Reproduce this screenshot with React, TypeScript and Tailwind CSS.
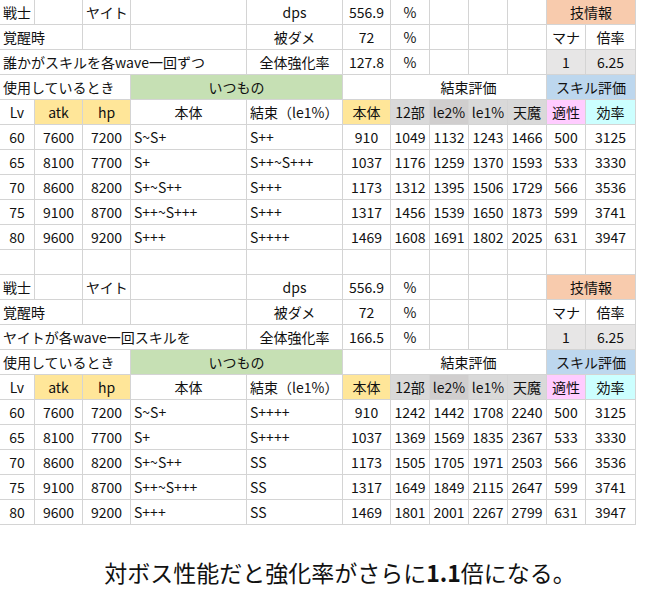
const W = [35, 48, 48, 116, 96, 48, 39, 39, 39, 39, 39, 50]

type Row = [number, number, number, string, string, number, number, number, number, number, number, number]

const t1: Row[] = [
  [60, 7600, 7200, "S~S+", "S++", 910, 1049, 1132, 1243, 1466, 500, 3125],
  [65, 8100, 7700, "S+", "S++~S+++", 1037, 1176, 1259, 1370, 1593, 533, 3330],
  [70, 8600, 8200, "S+~S++", "S+++", 1173, 1312, 1395, 1506, 1729, 566, 3536],
  [75, 9100, 8700, "S++~S+++", "S+++", 1317, 1456, 1539, 1650, 1873, 599, 3741],
  [80, 9600, 9200, "S+++", "S++++", 1469, 1608, 1691, 1802, 2025, 631, 3947],
]
const t2: Row[] = [
  [60, 7600, 7200, "S~S+", "S++++", 910, 1242, 1442, 1708, 2240, 500, 3125],
  [65, 8100, 7700, "S+", "S++++", 1037, 1369, 1569, 1835, 2367, 533, 3330],
  [70, 8600, 8200, "S+~S++", "SS", 1173, 1505, 1705, 1971, 2503, 566, 3536],
  [75, 9100, 8700, "S++~S+++", "SS", 1317, 1649, 1849, 2115, 2647, 599, 3741],
  [80, 9600, 9200, "S+++", "SS", 1469, 1801, 2001, 2267, 2799, 631, 3947],
]

const c = "border border-[#d4d4d4] h-[25px] p-0 text-center whitespace-nowrap overflow-visible"
const l = "border border-[#d4d4d4] h-[25px] px-[3px] py-0 text-left whitespace-nowrap"

function Block({ label, rate, rows }: { label: string; rate: string; rows: Row[] }) {
  return (
    <>
      <tr>
        <td className={l}>戦士</td>
        <td className={c}></td>
        <td className={l}>ヤイト</td>
        <td className={c}></td>
        <td className={c}>dps</td>
        <td className={c}>556.9</td>
        <td className={c}>%</td>
        <td className={c}></td>
        <td className={c}></td>
        <td className={c}></td>
        <td className={c + " bg-[#f8cbad]"} colSpan={2}>技情報</td>
      </tr>
      <tr>
        <td className={l} colSpan={2}>覚醒時</td>
        <td className={c}></td>
        <td className={c}></td>
        <td className={c}>被ダメ</td>
        <td className={c}>72</td>
        <td className={c}>%</td>
        <td className={c}></td>
        <td className={c}></td>
        <td className={c}></td>
        <td className={c}>マナ</td>
        <td className={c}>倍率</td>
      </tr>
      <tr>
        <td className={l} colSpan={4}>{label}</td>
        <td className={c}>全体強化率</td>
        <td className={c}>{rate}</td>
        <td className={c}>%</td>
        <td className={c}></td>
        <td className={c}></td>
        <td className={c}></td>
        <td className={c + " bg-[#e7e6e6]"}>1</td>
        <td className={c + " bg-[#e7e6e6]"}>6.25</td>
      </tr>
      <tr>
        <td className={l} colSpan={3}>使用しているとき</td>
        <td className={c + " bg-[#c6e0b4]"} colSpan={2}>いつもの</td>
        <td className={c}></td>
        <td className={c} colSpan={4}>結束評価</td>
        <td className={c + " bg-[#bdd7ee]"} colSpan={2}>スキル評価</td>
      </tr>
      <tr>
        <td className={c}>Lv</td>
        <td className={c + " bg-[#ffe699]"}>atk</td>
        <td className={c + " bg-[#ffe699]"}>hp</td>
        <td className={c}>本体</td>
        <td className={l}>結束（le1%）</td>
        <td className={c + " bg-[#ffe699]"}>本体</td>
        <td className={c + " bg-[#d9d9d9]"}>12部</td>
        <td className={c + " bg-[#d0cece]"}>le2%</td>
        <td className={c + " bg-[#d9d9d9]"}>le1%</td>
        <td className={c + " bg-[#d9d9d9]"}>天魔</td>
        <td className={c + " bg-[#ffccff]"}>適性</td>
        <td className={c + " bg-[#ccffff]"}>効率</td>
      </tr>
      {rows.map((r) => (
        <tr key={r[0]}>
          <td className={c}>{r[0]}</td>
          <td className={c}>{r[1]}</td>
          <td className={c}>{r[2]}</td>
          <td className={l}>{r[3]}</td>
          <td className={l}>{r[4]}</td>
          {r.slice(5).map((v, i) => (
            <td key={i} className={c}>{v}</td>
          ))}
        </tr>
      ))}
    </>
  )
}

export default function App() {
  return (
    <div className="w-[660px] h-[615px] bg-white text-[#111] text-[14px]" style={{ fontFamily: '"Noto Sans CJK JP", sans-serif' }}>
      <table className="border-collapse table-fixed w-[636px] -mt-px -ml-px leading-none">
        <colgroup>
          {W.map((w, i) => <col key={i} style={{ width: w }} />)}
        </colgroup>
        <tbody>
          <Block label="誰かがスキルを各wave一回ずつ" rate="127.8" rows={t1} />
          <tr>
            {W.map((_, i) => <td key={i} className={c}></td>)}
          </tr>
          <Block label="ヤイトが各wave一回スキルを" rate="166.5" rows={t2} />
        </tbody>
      </table>
      <div className="mt-[30px] text-center text-[23px] pl-[20px]">
        対ボス性能だと強化率がさらに<span className="font-bold">1.1</span>倍になる。
      </div>
    </div>
  )
}
